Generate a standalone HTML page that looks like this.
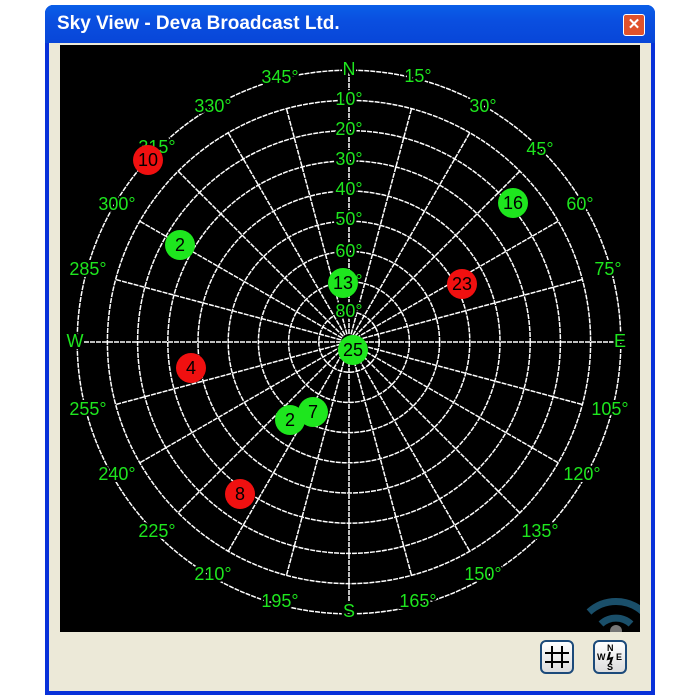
<!DOCTYPE html>
<html><head><style>
body{margin:0;width:700px;height:700px;background:#fff;overflow:hidden;font-family:"Liberation Sans",sans-serif}
.win{position:absolute;left:45px;top:5px;width:610px;height:690px;background:#0831d9;border-radius:8px 8px 0 0}
.title{position:absolute;left:0;top:0;width:610px;height:38px;background:linear-gradient(#0a5fe8,#0a4fe0 40%,#0846d8);border-radius:8px 8px 0 0}
.title span{position:absolute;left:12px;top:8px;color:#fff;font-weight:bold;font-size:19px}
.x{position:absolute;right:10px;top:9px;width:20px;height:20px;background:#e0522c;border:1px solid #fff;border-radius:3px;color:#fff;font-weight:bold;text-align:center;line-height:20px;font-size:15px}
.body{position:absolute;left:4px;top:38px;width:602px;height:648px;background:#ece9d8}
.btn{position:absolute;top:597px;width:34px;height:34px;border:2px solid #1c4a7a;border-radius:6px;background:linear-gradient(#fff,#ddd);box-sizing:border-box}
</style></head><body>
<div class="win"><div class="title"><span>Sky View - Deva Broadcast Ltd.</span><div class="x">✕</div></div>
<div class="body">
<div class="btn" style="left:491px"><svg width="30" height="30"><g stroke="#000" stroke-width="2"><line x1="10" y1="4" x2="10" y2="26"/><line x1="20" y1="4" x2="20" y2="26"/><line x1="3" y1="11" x2="27" y2="11"/><line x1="3" y1="20" x2="27" y2="20"/></g></svg></div>
<div class="btn" style="left:544px"><svg width="30" height="30" font-family="Liberation Sans" font-weight="bold" font-size="9"><text x="12" y="9">N</text><text x="2" y="18">W</text><text x="21" y="18">E</text><text x="12" y="28">S</text><path d="M15 10 L13 17 L17 16 L15 22" stroke="#000" fill="none" stroke-width="2"/></svg></div>
</div></div>
<svg style="position:absolute;left:60px;top:45px" width="580" height="587">
<rect width="580" height="587" fill="#000"/>
<g id="g" stroke="#fff" stroke-width="1.5" fill="none" stroke-dasharray="5 1"></g>
<g font-family="Liberation Sans" font-size="18" fill="#1ee61e" stroke="#000" stroke-width="4" paint-order="stroke" text-anchor="middle" dominant-baseline="middle">
<text x="289" y="25">N</text><text x="220" y="33">345°</text><text x="358" y="32">15°</text>
<text x="153" y="62">330°</text><text x="423" y="62">30°</text><text x="97" y="103">315°</text><text x="480" y="105">45°</text>
<text x="57" y="160">300°</text><text x="520" y="160">60°</text><text x="28" y="225">285°</text><text x="548" y="225">75°</text>
<text x="15" y="297">W</text><text x="560" y="297">E</text><text x="28" y="365">255°</text><text x="550" y="365">105°</text>
<text x="57" y="430">240°</text><text x="522" y="430">120°</text><text x="97" y="487">225°</text><text x="480" y="487">135°</text>
<text x="153" y="530">210°</text><text x="423" y="530">150°</text><text x="220" y="557">195°</text><text x="358" y="557">165°</text><text x="289" y="567">S</text>
<text x="289" y="55">10°</text><text x="289" y="85">20°</text><text x="289" y="115">30°</text><text x="289" y="145">40°</text><text x="289" y="175">50°</text><text x="289" y="207">60°</text><text x="289" y="237">70°</text><text x="289" y="267">80°</text>
</g>
<g font-family="Liberation Sans" font-size="18" text-anchor="middle" dominant-baseline="central" fill="#000">
<circle cx="88" cy="115" r="15" fill="#f01010"/><text x="88" y="115">10</text>
<circle cx="120" cy="200" r="15" fill="#1ee61e"/><text x="120" y="200">2</text>
<circle cx="453" cy="158" r="15" fill="#1ee61e"/><text x="453" y="158">16</text>
<circle cx="283" cy="238" r="15" fill="#1ee61e"/><text x="283" y="238">13</text>
<circle cx="402" cy="239" r="15" fill="#f01010"/><text x="402" y="239">23</text>
<circle cx="293" cy="305" r="15" fill="#1ee61e"/><text x="293" y="305">25</text>
<circle cx="131" cy="323" r="15" fill="#f01010"/><text x="131" y="323">4</text>
<circle cx="230" cy="375" r="15" fill="#1ee61e"/><text x="230" y="375">2</text>
<circle cx="253" cy="367" r="15" fill="#1ee61e"/><text x="253" y="367">7</text>
<circle cx="180" cy="449" r="15" fill="#f01010"/><text x="180" y="449">8</text>
</g>
<g fill="none" stroke="#1a4f6a" stroke-width="7"><path d="M529 567 A40 40 0 0 1 583 567"/><path d="M541 579 A22 22 0 0 1 571 579"/></g><circle cx="556" cy="586" r="6" fill="#777"/>
</svg>
<script>
var g=document.getElementById('g'),cx=289,cy=297,s='';
for(var i=1;i<=9;i++){s+='<circle cx="'+cx+'" cy="'+cy+'" r="'+(i*30.2)+'"/>';}
for(var a=0;a<360;a+=15){var r=a%90==0?272:242,t=a*Math.PI/180;s+='<line x1="'+(cx+8*Math.sin(t))+'" y1="'+(cy-8*Math.cos(t))+'" x2="'+(cx+r*Math.sin(t))+'" y2="'+(cy-r*Math.cos(t))+'"/>';}
g.innerHTML=s;
</script>
</body></html>
